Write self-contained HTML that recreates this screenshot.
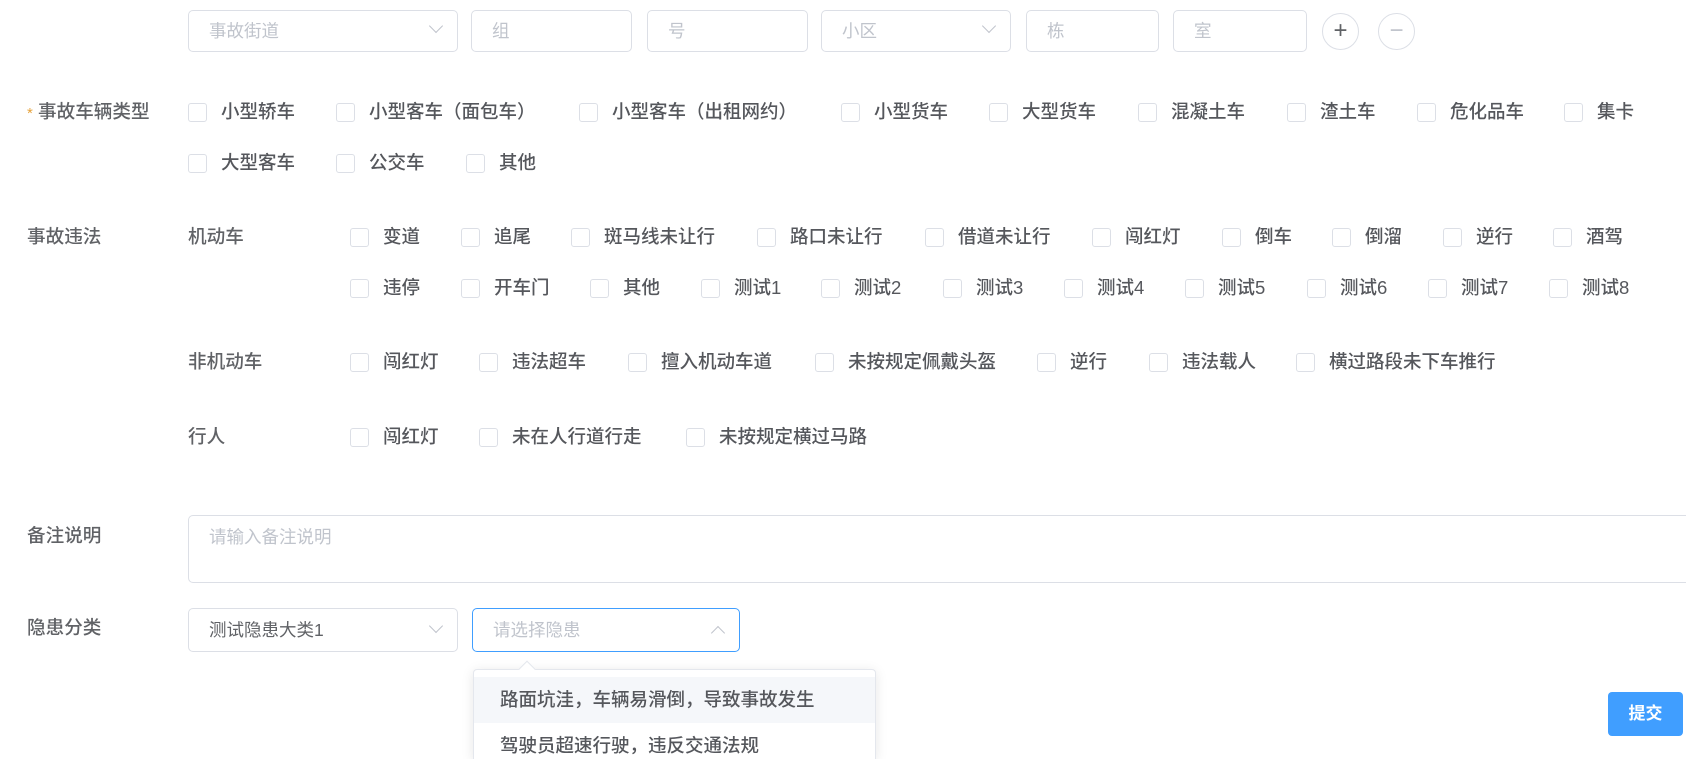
<!DOCTYPE html>
<html style="width:1686px;height:759px;overflow:hidden"><head><meta charset="utf-8"><style>
*{box-sizing:border-box;margin:0;padding:0}
body{width:1686px;height:759px;overflow:hidden;background:#fff;position:relative;font-family:"Liberation Sans","Noto Sans CJK SC",sans-serif;color:#606266;font-size:18px}
.a{position:absolute;white-space:nowrap}
.in{position:absolute;border:1px solid #dcdfe6;border-radius:5px;height:42px;top:10px;color:#c0c4cc;font-size:17.5px;line-height:40px;padding-left:20px;background:#fff}
.cb{position:absolute;width:19px;height:19px;border:1px solid #dcdfe6;border-radius:3px;background:#fff}
.t{position:absolute;white-space:nowrap;font-size:18.5px;line-height:24px;color:#55575c;font-weight:500}
.lb{position:absolute;white-space:nowrap;font-size:18.6px;line-height:24px;color:#606266;font-weight:500}
.chev{position:absolute;right:16px;top:14px;width:10px;height:10px;border-right:1.5px solid #c0c4cc;border-bottom:1.5px solid #c0c4cc;transform:rotate(45deg)}
.circ{position:absolute;top:13px;width:37px;height:37px;border:1px solid #dcdfe6;border-radius:50%;color:#606266;font-size:24px;text-align:center;line-height:34px}
</style></head><body>
<div class="in" style="left:188px;width:270px">事故街道<div class="chev" style="top:10px"></div></div>
<div class="in" style="left:471px;width:161px">组</div>
<div class="in" style="left:647px;width:161px">号</div>
<div class="in" style="left:821px;width:190px">小区<div class="chev" style="top:10px"></div></div>
<div class="in" style="left:1026px;width:133px">栋</div>
<div class="in" style="left:1173px;width:134px">室</div>
<div class="circ" style="left:1322px">+</div>
<div class="circ" style="left:1378px;color:#c0c4cc">−</div>

<div class="lb" style="left:27px;top:100px"><span style="color:#e6a23c;font-size:15px">*</span> 事故车辆类型</div>

<div class="lb" style="left:27px;top:225px">事故违法</div>
<div class="lb" style="left:188px;top:225px">机动车</div>
<div class="lb" style="left:188px;top:350px">非机动车</div>
<div class="lb" style="left:188px;top:425px">行人</div>

<div class="lb" style="left:27px;top:524px">备注说明</div>
<div class="a" style="left:188px;top:515px;width:1520px;height:68px;border:1px solid #dcdfe6;border-radius:5px;color:#c0c4cc;font-size:17.5px;padding:8px 20px">请输入备注说明</div>

<div class="lb" style="left:27px;top:616px">隐患分类</div>
<div class="in" style="left:188px;top:608px;width:270px;height:44px;line-height:42px;color:#606266">测试隐患大类1<div class="chev" style="top:12px"></div></div>
<div class="in" style="left:472px;top:608px;width:268px;height:44px;line-height:42px;border-color:#409eff">请选择隐患<div class="chev" style="top:19px;transform:rotate(225deg)"></div></div>

<div class="a" style="left:473px;top:669px;width:403px;height:90px;border:1px solid #e4e7ed;border-bottom:none;border-radius:4px 4px 0 0;background:#fff;box-shadow:0 2px 12px rgba(0,0,0,.1)"></div>
<div class="a" style="left:521px;top:663px;width:12px;height:12px;background:#fff;border-left:1px solid #e4e7ed;border-top:1px solid #e4e7ed;transform:rotate(45deg)"></div>
<div class="a" style="left:474px;top:677px;width:401px;height:46px;background:#f5f7fa"></div>
<div class="t" style="left:500px;top:688px">路面坑洼，车辆易滑倒，导致事故发生</div>
<div class="t" style="left:500px;top:734px">驾驶员超速行驶，违反交通法规</div>

<div class="a" style="left:1608px;top:692px;width:75px;height:44px;background:#409eff;border-radius:4px;color:#fff;font-size:17px;font-weight:bold;text-align:center;line-height:44px">提交</div>

<script>
function row(y,items){var h='';items.forEach(function(it){h+='<div class="cb" style="left:'+it[0]+'px;top:'+(y-9)+'px"></div><div class="t" style="left:'+(it[0]+33)+'px;top:'+(y-12)+'px">'+it[1]+'</div>';});document.body.insertAdjacentHTML('beforeend',h);}
row(112,[[188,'小型轿车'],[336,'小型客车（面包车）'],[579,'小型客车（出租网约）'],[841,'小型货车'],[989,'大型货车'],[1138,'混凝土车'],[1287,'渣土车'],[1417,'危化品车'],[1564,'集卡']]);
row(163,[[188,'大型客车'],[336,'公交车'],[466,'其他']]);
row(237,[[350,'变道'],[461,'追尾'],[571,'斑马线未让行'],[757,'路口未让行'],[925,'借道未让行'],[1092,'闯红灯'],[1222,'倒车'],[1332,'倒溜'],[1443,'逆行'],[1553,'酒驾']]);
row(288,[[350,'违停'],[461,'开车门'],[590,'其他'],[701,'测试1'],[821,'测试2'],[943,'测试3'],[1064,'测试4'],[1185,'测试5'],[1307,'测试6'],[1428,'测试7'],[1549,'测试8']]);
row(362,[[350,'闯红灯'],[479,'违法超车'],[628,'擅入机动车道'],[815,'未按规定佩戴头盔'],[1037,'逆行'],[1149,'违法载人'],[1296,'横过路段未下车推行']]);
row(437,[[350,'闯红灯'],[479,'未在人行道行走'],[686,'未按规定横过马路']]);
</script>
</body></html>
